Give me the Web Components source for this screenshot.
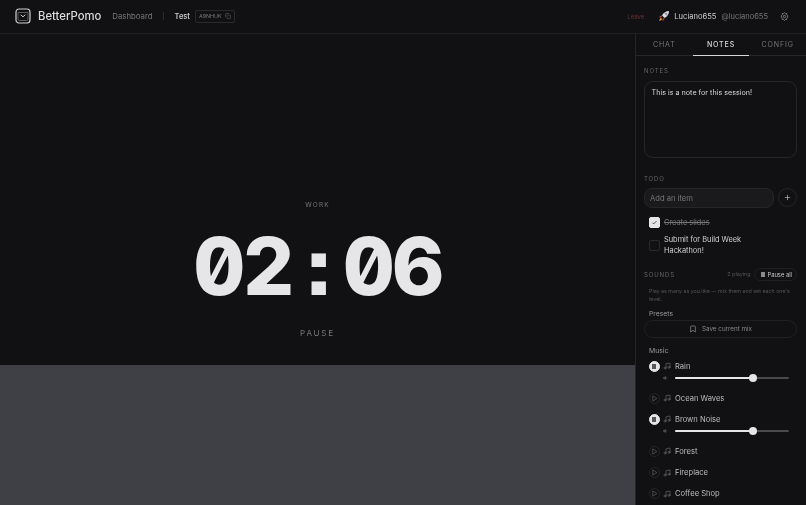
<!DOCTYPE html>
<html>
<head>
<meta charset="utf-8">
<style>
    html, body { margin: 0; height: 100%; background: #111113; overflow: hidden; }
    body { font-family: Inter, "Noto Sans", sans-serif; color: #e6e6e8; }
    pomo-app { width: 806px; height: 505px; filter: blur(0.3px); }
</style>
</head>
<body>
<pomo-app>
    <pomo-header slot="header"></pomo-header>
    <pomo-timer slot="main" mode="WORK" action="PAUSE"></pomo-timer>
    <pomo-side slot="side">
        <pomo-label>NOTES</pomo-label>
        <div class="notes" style="box-sizing:border-box;height:77px;margin:6px 0 17px;padding:5px 6.5px;border:1px solid #26262a;border-radius:9px;font-size:7.2px;line-height:12px;color:#d8d8da">This is a note for this session!</div>
        <pomo-label>TODO</pomo-label>
        <pomo-todo-form></pomo-todo-form>
        <pomo-todo checked>Create slides</pomo-todo>
        <pomo-todo>Submit for Build Week Hackathon!</pomo-todo>
        <pomo-sounds>
            <pomo-sound playing>Rain</pomo-sound>
            <pomo-sound>Ocean Waves</pomo-sound>
            <pomo-sound playing>Brown Noise</pomo-sound>
            <pomo-sound>Forest</pomo-sound>
            <pomo-sound>Fireplace</pomo-sound>
            <pomo-sound>Coffee Shop</pomo-sound>
        </pomo-sounds>
    </pomo-side>
</pomo-app>

<script>
const note = `<svg width="8" height="8" viewBox="0 0 24 24" fill="none" stroke="#66666a" stroke-width="2" stroke-linecap="round" stroke-linejoin="round"><path d="M9 18V5l12-2v13"/><circle cx="6" cy="18" r="3"/><circle cx="18" cy="16" r="3"/></svg>`;

class PomoApp extends HTMLElement {
    constructor() {
        super();
        this.attachShadow({ mode: "open" });
        this.shadowRoot.innerHTML = `
            <style>
                :host { display: grid; grid-template-columns: 635px 171px; grid-template-rows: 34px 471px; }
                ::slotted([slot=header]) { grid-column: 1 / 3; }
            </style>
            <slot name="header"></slot>
            <slot name="main"></slot>
            <slot name="side"></slot>
        `;
    }
}

class PomoHeader extends HTMLElement {
    constructor() {
        super();
        this.attachShadow({ mode: "open" });
        this.shadowRoot.innerHTML = `
            <style>
                :host { display: flex; align-items: center; box-sizing: border-box; height: 34px; padding: 0 17px 1px 15px; border-bottom: 1px solid #212124; white-space: nowrap; }
                .logo { width: 16px; height: 16px; margin-right: 7px; }
                .brand { font-size: 11.3px; font-weight: 500; color: #dcdcde; margin-right: 11px; }
                .dash { font-size: 7.8px; color: #77777b; }
                .sep { width: 1px; height: 8px; background: #2c2c30; margin: 0 10.5px; }
                .room { font-size: 7.4px; font-weight: 600; color: #c8c8ca; margin-right: 5px; }
                .code { display: flex; align-items: center; gap: 3px; height: 11px; padding: 0 3px; border: 1px solid #2a2a2e; border-radius: 2px; font-size: 5.4px; color: #77777b; }
                .right { margin-left: auto; display: flex; align-items: center; }
                .leave { font-size: 6px; color: #6a3030; margin-right: 14px; }
                .name { font-size: 7.6px; color: #cfcfd1; margin: 0 5px 0 4px; }
                .handle { font-size: 7.500px; color: #77777b; margin-right: 12px; }
            </style>
            <svg class="logo" viewBox="0 0 16 16" fill="none" stroke="#cfcfd1"><rect x="1" y="1" width="14" height="14" rx="3" stroke-width="1.2"/><path d="M3 4.5h10v6.5a1.5 1.5 0 0 1-1.5 1.5h-7A1.5 1.5 0 0 1 3 11z" stroke="#77777b" stroke-width=".7"/><path d="M5.7 6.8L8 8.8l2.3-2" stroke-width="1"/></svg>
            <span class="brand">BetterPomo</span>
            <span class="dash">Dashboard</span>
            <span class="sep"></span>
            <span class="room">Test</span>
            <span class="code">A9NHUK
                <svg width="6" height="6" viewBox="0 0 24 24" fill="none" stroke="#66666a" stroke-width="2"><rect x="8" y="8" width="14" height="14" rx="2"/><path d="M4 16a2 2 0 0 1-2-2V4a2 2 0 0 1 2-2h10a2 2 0 0 1 2 2"/></svg>
            </span>
            <div class="right">
                <span class="leave">Leave</span>
                <svg width="12" height="12" viewBox="0 0 24 24"><path d="M22 2c-6 0-11 3-14 9l5 5c6-3 9-8 9-14z" fill="#d9d9de"/><path d="M16 5l3 3-2 3-4-4z" fill="#7f8fb0"/><path d="M8 11l-4 1-2 3 5-.5zM13 16l-1 4-3 2 .5-5z" fill="#c2453a"/><path d="M6 16c-2 1-3 4-4 6 3-1 5-2 6-4z" fill="#f2b233"/></svg>
                <span class="name">Luciano655</span>
                <span class="handle">@luciano655</span>
                <svg width="9" height="9" viewBox="0 0 24 24" fill="none" stroke="#9a9a9e" stroke-width="2" stroke-linejoin="round"><path d="M12 1.5l2.6 2.6h3.3v3.3L20.5 10v4l-2.6 2.6v3.3h-3.3L12 22.5l-2.6-2.6H6.1v-3.3L3.5 14v-4l2.6-2.6V4.100h3.300z"/><circle cx="12" cy="12" r="3.200"/></svg>
            </div>
        `;
    }
}

class PomoTimer extends HTMLElement {
    constructor() {
        super();
        this.attachShadow({ mode: "open" });
        this.shadowRoot.innerHTML = `
            <style>
                :host { display: flex; flex-direction: column; }
                .stage { height: 331px; display: flex; flex-direction: column; align-items: center; padding-top: 167px; box-sizing: border-box; }
                .mode { font-size: 6.5px; letter-spacing: 1.2px; color: #77777b; line-height: 8px; }
                .time { font-size: 80px; font-weight: 800; line-height: 100px; margin-top: 7px; color: #e6e6e8; font-feature-settings: "tnum", "zero", "ss07"; letter-spacing: -2.400px; }
                .colon { display: inline-block; width: 51.200px; text-align: center; }
                .action { margin-top: 12px; font-size: 8px; letter-spacing: 1.800px; color: #77777b; line-height: 10px; }
                .band { flex: 1; background: #3f4046; }
            </style>
            <div class="stage">
                <div class="mode">${this.getAttribute("mode")}</div>
                <div class="time">02<span class="colon">:</span>06</div>
                <div class="action">${this.getAttribute("action")}</div>
            </div>
            <div class="band"></div>
        `;
    }
}

class PomoSide extends HTMLElement {
    constructor() {
        super();
        this.attachShadow({ mode: "open" });
        this.shadowRoot.innerHTML = `
            <style>
                :host { display: block; box-sizing: border-box; border-left: 1px solid #26262a; overflow: hidden; height: 471px; }
                .tabs { display: flex; height: 22px; border-bottom: 1px solid #26262a; font-size: 7px; letter-spacing: .9px; color: #77777b; box-sizing: border-box; }
                .tabs div { flex: 1; display: flex; align-items: center; justify-content: center; box-sizing: border-box; }
                .tabs .on { color: #d8d8da; font-weight: 500; border-bottom: 1.500px solid #d8d8da; height: 22px; }
                .body { padding: 11px 9px 0 8px; }
            </style>
            <div class="tabs"><div>CHAT</div><div class="on">NOTES</div><div>CONFIG</div></div>
            <div class="body"><slot></slot></div>
        `;
    }
}

class PomoLabel extends HTMLElement {
    constructor() {
        super();
        this.attachShadow({ mode: "open" });
        this.shadowRoot.innerHTML = `
            <style>:host { display: block; font-size: 6px; line-height: 8px; letter-spacing: .9px; color: #66666a; }</style>
            <slot></slot>
        `;
    }
}

class PomoTodoForm extends HTMLElement {
    constructor() {
        super();
        this.attachShadow({ mode: "open" });
        this.shadowRoot.innerHTML = `
            <style>
                :host { display: flex; gap: 4px; margin: 5px 0 6px; }
                .input { flex: 1; height: 20px; box-sizing: border-box; padding: 0 5px; display: flex; align-items: center; background: #1a1a1d; border: 1px solid #26262a; border-radius: 8px; font-size: 7.6px; color: #77777b; }
                .add { width: 19px; height: 19px; box-sizing: border-box; border: 1px solid #26262a; border-radius: 50%; display: flex; align-items: center; justify-content: center; }
            </style>
            <div class="input">Add an item</div>
            <div class="add"><svg width="7" height="7" viewBox="0 0 24 24" fill="none" stroke="#b0b0b3" stroke-width="2.500"><path d="M12 3v18M3 12h18"/></svg></div>
        `;
    }
}

class PomoTodo extends HTMLElement {
    constructor() {
        super();
        this.attachShadow({ mode: "open" });
        const on = this.hasAttribute("checked");
        this.shadowRoot.innerHTML = `
            <style>
                :host { display: flex; align-items: center; gap: 4px; padding: 3px 4px 3px 5px; font-size: 7.400px; line-height: 11px; color: ${on ? "#77777b" : "#cfcfd1"}; ${on ? "text-decoration: line-through;" : ""} }
                .box { flex: none; width: 11px; height: 11px; box-sizing: border-box; border-radius: 2px; display: flex; align-items: center; justify-content: center; background: ${on ? "#e6e6e8" : "transparent"}; border: 1px solid ${on ? "#e6e6e8" : "#2a2a2e"}; }
                .text { max-width: 90px; }
            </style>
            <div class="box">${on ? `<svg width="7" height="7" viewBox="0 0 24 24" fill="none" stroke="#444" stroke-width="3"><path d="M5 13l4 4L19 7"/></svg>` : ""}</div>
            <div class="text"><slot></slot></div>
        `;
    }
}

class PomoSounds extends HTMLElement {
    constructor() {
        super();
        this.attachShadow({ mode: "open" });
        this.shadowRoot.innerHTML = `
            <style>
                :host { display: block; margin-top: 8px; }
                .head { display: flex; align-items: center; height: 14px; }
                .title { font-size: 6px; letter-spacing: .9px; color: #66666a; }
                .count { margin-left: auto; font-size: 5.400px; color: #55555a; margin-right: 4px; }
                .pause { display: flex; align-items: center; gap: 2px; height: 13px; padding: 0 4px 0 6px; box-sizing: border-box; border: 1px solid #212124; border-radius: 7px; font-size: 5.800px; color: #c8c8ca; }
                .bars { width: 4px; height: 5px; background: #8a8a8e; }
                .help { margin: 6px 4px 0 5px; font-size: 5.300px; line-height: 8px; color: #55555a; }
                h4 { margin: 5.500px 4px 2.500px 5px; font-size: 6.800px; line-height: 9px; font-weight: 400; color: #9a9a9e; }
                .save { height: 18px; border: 1px solid #212124; border-radius: 9px; box-sizing: border-box; display: flex; align-items: center; justify-content: center; gap: 5px; font-size: 6.300px; color: #88888c; }
            </style>
            <div class="head">
                <span class="title">SOUNDS</span>
                <span class="count">2 playing</span>
                <span class="pause"><span class="bars"></span>Pause all</span>
            </div>
            <div class="help">Play as many as you like — mix them and set each one's level.</div>
            <h4>Presets</h4>
            <div class="save"><svg width="8" height="8" viewBox="0 0 24 24" fill="none" stroke="#9a9a9e" stroke-width="2"><path d="M19 21l-7-5-7 5V5a2 2 0 0 1 2-2h10a2 2 0 0 1 2 2z"/></svg>Save current mix</div>
            <h4 style="margin-top:7.500px;margin-bottom:4.500px">Music</h4>
            <slot></slot>
        `;
    }
}

class PomoSound extends HTMLElement {
    constructor() {
        super();
        this.attachShadow({ mode: "open" });
        const playing = this.hasAttribute("playing");
        this.shadowRoot.innerHTML = `
            <style>
                :host { display: block; padding-left: 4.500px; margin-bottom: ${playing ? 8 : 7.300}px; }
                .row { display: flex; align-items: center; height: 14px; gap: 3px; font-size: 7.600px; color: #bcbcbe; }
                .btn { flex: none; width: 11px; height: 11px; border-radius: 50%; display: flex; align-items: center; justify-content: center; box-sizing: border-box; background: ${playing ? "#e6e6e8" : "transparent"}; border: 1px solid ${playing ? "#e6e6e8" : "#26262a"}; }
                .stop { width: 4px; height: 5px; background: #55555a; }
                .name { margin-left: 1.500px; }
                .level { display: flex; align-items: center; gap: 6px; margin: 0 8px 0 14.500px; height: 10px; }
                .track { flex: 1; height: 2px; background: #4a4a4e; border-radius: 1px; position: relative; }
                .fill { position: absolute; left: 0; top: 0; bottom: 0; width: 68%; background: #e6e6e8; border-radius: 1px; }
                .knob { position: absolute; left: 68%; top: -3px; width: 8px; height: 8px; margin-left: -4px; border-radius: 50%; background: #e6e6e8; }
            </style>
            <div class="row">
                <div class="btn">${playing ? `<div class="stop"></div>` : `<svg width="7" height="7" viewBox="0 0 24 24" fill="none" stroke="#66666a" stroke-width="2.200" stroke-linejoin="round"><path d="M6 3l14 9-14 9z"/></svg>`}</div>
                ${note}
                <span class="name"><slot></slot></span>
            </div>
            ${playing ? `<div class="level"><svg width="6" height="6" viewBox="0 0 24 24" fill="#55555a" stroke="#55555a" stroke-width="2"><path d="M11 5L6 9H2v6h4l5 4z"/><path d="M15 9a4 4 0 0 1 0 6" fill="none"/></svg><div class="track"><div class="fill"></div><div class="knob"></div></div></div>` : ""}
        `;
    }
}

customElements.define("pomo-app", PomoApp);
customElements.define("pomo-header", PomoHeader);
customElements.define("pomo-timer", PomoTimer);
customElements.define("pomo-side", PomoSide);
customElements.define("pomo-label", PomoLabel);
customElements.define("pomo-todo-form", PomoTodoForm);
customElements.define("pomo-todo", PomoTodo);
customElements.define("pomo-sounds", PomoSounds);
customElements.define("pomo-sound", PomoSound);
</script>
</body>
</html>
